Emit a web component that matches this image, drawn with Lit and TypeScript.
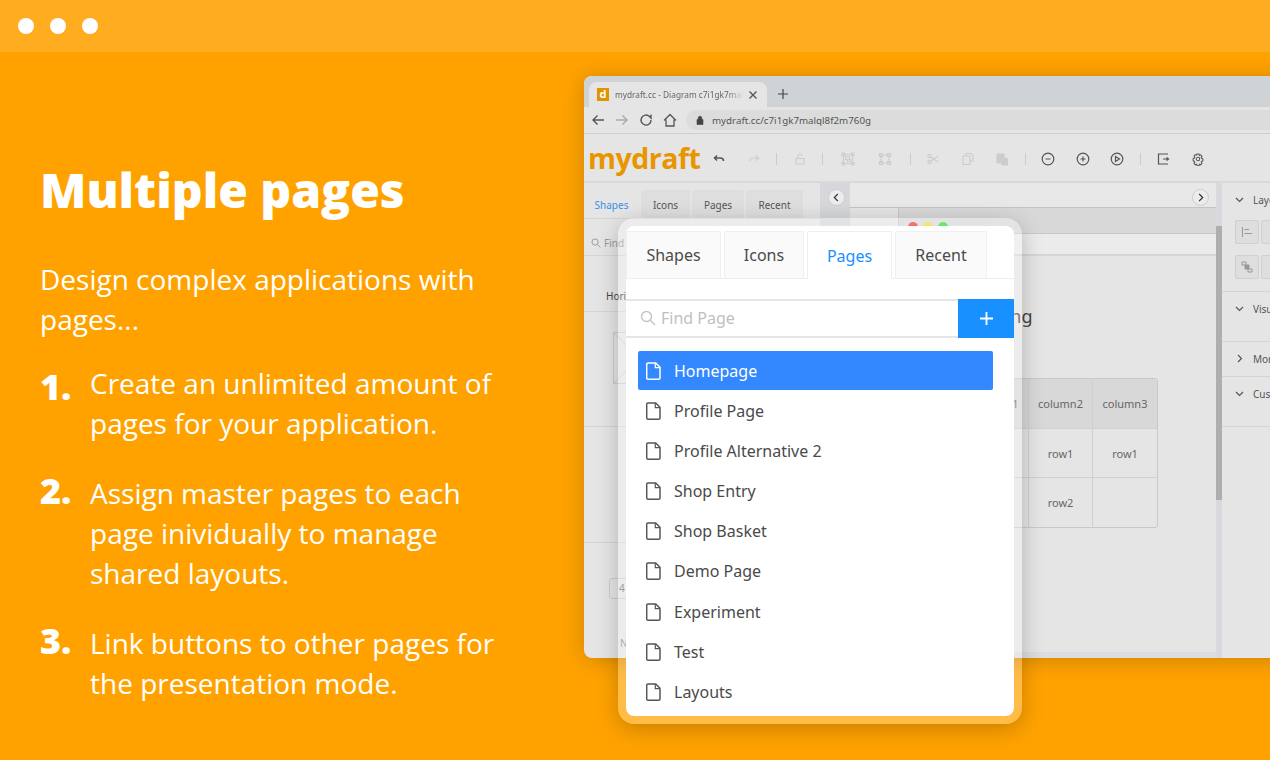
import { LitElement, html, css, svg } from "lit";
import { customElement } from "lit/decorators.js";

const pageIcon = svg`<path d="M2 .9h7.700l4.300 4.400v10.600a1.300 1.300 0 0 1-1.300 1.300H2a1.300 1.300 0 0 1-1.300-1.300V2.200A1.300 1.300 0 0 1 2 .9z" fill="none" stroke="currentColor" stroke-width="1.500"/><path d="M9.300 1.200v4.500h4.400" fill="none" stroke="currentColor" stroke-width="1.200"/>`;
const pages = ["Homepage", "Profile Page", "Profile Alternative 2", "Shop Entry", "Shop Basket", "Demo Page", "Experiment", "Test", "Layouts"];
const tabs = ["Shapes", "Icons", "Pages", "Recent"];
const tabWidths = [95, 80, 85, 92];
const steps = [
  ["1.", "Create an unlimited amount of pages for your application."],
  ["2.", "Assign master pages to each page inividually to manage shared layouts."],
  ["3.", "Link buttons to other pages for the presentation mode."],
];

@customElement("app-root")
export class AppRoot extends LitElement {
  static styles = css`
    :host { display: block; width: 1270px; height: 760px; overflow: hidden; position: relative; background: #ffa200; font-family: "Open Sans", sans-serif; color: #fff; }
    .topbar { height: 52px; background: #ffac21; display: flex; align-items: center; gap: 16px; padding-left: 18px; box-sizing: border-box; }
    .dot { width: 16px; height: 16px; border-radius: 50%; background: #fff; }
    .main { display: flex; height: 708px; }
    .copy { width: 584px; flex: none; box-sizing: border-box; padding: 103px 60px 0 40px; }
    h1 { margin: 0 0 34px; font-size: 48px; line-height: 70px; font-weight: 800; height: 70px; }
    .intro { margin: 0 0 24px; font-size: 28px; line-height: 40px; font-weight: 400; width: 460px; }
    .step { display: flex; margin-bottom: 30px; font-size: 28px; line-height: 40px; }
    .num { width: 50px; flex: none; font-weight: 800; font-size: 36px; padding-top: 4px; box-sizing: border-box; height: 40px; }
    .num.lift { padding-top: 0; margin-top: -2px; }
    .txt { width: 420px; }
    .stage { flex: 1; padding-top: 24px; min-width: 0; }
    .win { height: 582px; width: 720px; background: #e5e5e5; border-radius: 8px 0 0 8px; overflow: hidden; color: #444; font-family: "Open Sans", sans-serif; display: flex; flex-direction: column; }
    .shadow { border-radius: 8px 0 0 8px; box-shadow: 0 2px 22px rgba(0,0,0,.2); height: 582px; width: 720px; }
    .chrome { height: 31px; flex: none; background: #d0d3d6; padding: 6px 0 0 5px; box-sizing: border-box; display: flex; align-items: stretch; }
    .ctab { width: 178px; background: #e5e5e5; border-radius: 8px 8px 0 0; display: flex; align-items: center; box-sizing: border-box; padding: 0 7px 0 8px; color: #666; white-space: nowrap; }
    .fav { width: 12px; height: 13px; background: #e39300; color: #fff; font-weight: 700; font-size: 11px; line-height: 12px; text-align: center; flex: none; margin-right: 6px; }
    .ctitle { width: 130px; overflow: hidden; font-family: "Noto Sans", sans-serif; font-size: 8.300px; -webkit-mask-image: linear-gradient(to right, #000 88%, transparent); mask-image: linear-gradient(to right, #000 88%, transparent); }
    .cx { width: 14px; height: 14px; margin-left: 3px; flex: none; }
    .plus { margin: 6px 0 0 10px; width: 12px; height: 12px; flex: none; }
    .addr { height: 27px; flex: none; display: flex; align-items: center; padding-left: 7px; box-sizing: border-box; border-bottom: 1px solid #cfcfcf; }
    .addr > svg { width: 14px; height: 14px; margin-right: 10px; flex: none; }
    .pill { margin-left: -1px; height: 20px; flex: 1; background: #dcdcdc; border-radius: 10px 0 0 10px; display: flex; align-items: center; padding-left: 9px; font-size: 9.750px; color: #555; font-family: "Noto Sans", sans-serif; white-space: nowrap; }
    .pill svg { width: 10px; height: 10px; margin-right: 7px; flex: none; }
    .tools { height: 49px; flex: none; display: flex; align-items: center; border-bottom: 2px solid #d9d9d9; box-sizing: border-box; padding-top: 2px; }
    .logo { font-size: 28.500px; font-weight: 700; color: #e89500; margin-left: 4px; width: 124px; flex: none; letter-spacing: -.5px; line-height: 38px; margin-bottom: 2px; }
    .tools svg { width: 14px; height: 14px; flex: none; fill: none; stroke: #555; stroke-width: 1.200; }
    .tools svg.off { stroke: #cdcdcd; }
    .ti { margin-right: 20.500px; display: flex; flex: none; }
    .ti.w1 { margin-left: 2px; margin-right: 23.500px; }
    .ti.w2 { margin-right: 22.500px; }
    .sep { width: 1px; height: 12px; background: #ccc; margin: 0 15.500px 0 -5px; flex: none; }
    .body { flex: 1; display: flex; min-height: 0; }
    .left { width: 236px; flex: none; font-size: 10px; display: flex; flex-direction: column; }
    .ltabs { display: flex; height: 36px; gap: 2px; box-sizing: border-box; padding-top: 7px; border-bottom: 1px solid #d5d5d5; }
    .ltab { background: #dedede; display: flex; align-items: center; justify-content: center; font-family: "Noto Sans", sans-serif; color: #555; font-size: 10px; box-sizing: border-box; border-radius: 2px 2px 0 0; padding-top: 1px; }
    .ltab.on { background: #e5e5e5; color: #3a90e6; }
    .lfind { height: 37px; padding: 11px 0 0 7px; display: flex; align-items: center; gap: 3px; color: #999; border-bottom: 1px solid #d5d5d5; font-family: "Noto Sans", sans-serif; box-sizing: border-box; }
    .lfind svg { width: 10px; height: 10px; }
    .lhori { height: 56px; padding: 33px 0 0 22px; line-height: 15px; box-sizing: border-box; border-bottom: 1px solid #d5d5d5; font-family: "Noto Sans", sans-serif; }
    .lbox { width: 52px; height: 52px; margin: 20px 0 0 29px; border: 1px solid #ccc; box-sizing: border-box; background: linear-gradient(to bottom left, transparent 49.500%, #ccc 50%, transparent 50.500%), linear-gradient(to bottom right, transparent 49.500%, #ccc 50%, transparent 50.500%); }
    .lrule { margin-top: 42px; border-top: 1px solid #d5d5d5; border-bottom: 1px solid #d5d5d5; height: 117px; box-sizing: border-box; flex: none; }
    .lnum { width: 30px; height: 21px; margin: 35px 0 0 25px; border: 1px solid #ccc; border-radius: 3px; box-sizing: border-box; padding-left: 9px; line-height: 19px; font-family: "Noto Sans", sans-serif; color: #777; }
    .ln { margin: 37px 0 0 36px; color: #888; font-family: "Noto Sans", sans-serif; line-height: 14px; }
    .gutter { width: 30px; flex: none; background: #d5d7da; padding: 6px 0 0 8px; box-sizing: border-box; }
    .circ { width: 17px; height: 17px; border-radius: 50%; background: #ececec; border: 1px solid #ccc; box-sizing: border-box; display: block; }
    .canvas { width: 366px; flex: none; display: flex; flex-direction: column; }
    .chead { height: 25px; background: #e8e8e8; border-bottom: 1px solid #c4c4c4; display: flex; justify-content: flex-end; padding: 6px 7px 0 0; box-sizing: border-box; flex: none; }
    .cbar1 { height: 26px; margin-left: 48px; background: #d8d8d8; border-bottom: 1px solid #c8c8c8; border-left: 1px solid #c8c8c8; box-sizing: border-box; flex: none; }
    .cbar2 { height: 22px; background: #ebebeb; border-bottom: 2px solid #d6d6d6; margin-left: 48px; box-sizing: border-box; flex: none; }
    .cbody { flex: 1; padding: 0 0 0 113px; border-bottom: 6px solid #dcdde0; min-height: 0; }
    .chtxt { font-size: 18px; height: 122px; padding: 48px 0 0 1px; box-sizing: border-box; color: #444; font-family: "Noto Sans", sans-serif; }
    .grid { width: 195px; border: 1px solid #c9c9c9; border-radius: 3px; display: grid; grid-template-columns: 65px 64px 64px; grid-template-rows: 50px 49px 49px; font-size: 11px; color: #666; font-family: "Noto Sans", sans-serif; box-sizing: border-box; }
    .cell { display: flex; align-items: center; justify-content: center; border-right: 1px solid #d0d0d0; border-bottom: 1px solid #d0d0d0; box-sizing: border-box; }
    .cell.h { background: #d8d8d8; }
    .cell:nth-child(3n) { border-right: 0; }
    .cell:nth-last-child(-n+3) { border-bottom: 0; }
    .scroll { width: 6px; flex: none; background: #d8d9dc; }
    .scroll i { display: block; width: 6px; height: 274px; margin-top: 43px; background: #aeaeae; }
    .right { flex: 1; font-size: 10px; color: #555; font-family: "Noto Sans", sans-serif; overflow: hidden; white-space: nowrap; min-width: 0; }
    .sec { border-bottom: 1px solid #d4d4d4; padding-left: 13px; box-sizing: border-box; }
    .hd { display: flex; align-items: center; gap: 9px; height: 17px; padding-top: 8px; }
    .hd svg { width: 9px; height: 9px; fill: none; stroke: #555; stroke-width: 1.200; flex: none; }
    .btns { display: flex; gap: 2px; margin-top: 11px; }
    .hd + .btns { margin-top: 12px; }
    .bt { width: 24px; height: 24px; background: #dedede; border: 1px solid #d0d0d0; border-radius: 2px; box-sizing: border-box; flex: none; display: flex; align-items: center; justify-content: center; }
    .bt svg { width: 12px; height: 12px; fill: none; stroke: #999; stroke-width: 1; }
    .s109 { height: 109px; }
    .s50 { height: 50px; }
    .s35 { height: 35px; }

    .pop { position: absolute; left: 618px; top: 218px; width: 404px; height: 506px; box-sizing: border-box; border: 8px solid rgba(255,255,255,.28); border-radius: 16px; background-clip: padding-box; box-shadow: 0 5px 22px rgba(0,0,0,.22); }
    .traffic { position: absolute; left: 908px; top: 222px; display: flex; gap: 5px; }
    .traffic i { width: 10px; height: 10px; border-radius: 50%; display: block; }
    .r { background: #f03a3a; }
    .y { background: #e6e030; }
    .g { background: #30e030; }
    .sheet { background: #fff; height: 100%; border-radius: 8px; overflow: hidden; color: #444; font-family: "Noto Sans", sans-serif; }
    .ptabs { display: flex; height: 53px; padding-top: 5px; gap: 3px; box-sizing: border-box; border-bottom: 1px solid #eee; }
    .ptab { background: #fafafa; border: 1px solid #f0f0f0; border-bottom: 0; display: flex; align-items: center; justify-content: center; font-size: 16px; box-sizing: border-box; border-radius: 2px 2px 0 0; color: #4a4a4a; }
    .ptab.on { background: #fff; color: #1890ff; height: 48px; border-color: #eee; }
    .psearch { margin-top: 20px; height: 39px; border-top: 2px solid #e6e6e6; border-bottom: 2px solid #e6e6e6; display: flex; align-items: center; box-sizing: border-box; position: relative; padding-bottom: 1px; }
    .psearch > svg { width: 16px; height: 16px; margin-left: 14px; fill: none; stroke: #c4c4c4; stroke-width: 1.400; }
    .psearch span { margin-left: 5px; font-size: 16px; color: #bfbfbf; }
    .add { position: absolute; right: 0; top: -2px; width: 56px; height: 39px; background: #1890ff; display: flex; align-items: center; justify-content: center; }
    .add svg { width: 13px; height: 13px; stroke: #fff; stroke-width: 2; }
    .plist { padding: 13px 21px 0 12px; }
    .pitem { height: 40.100px; display: flex; align-items: center; padding-left: 8px; font-size: 16px; color: #4a4a4a; border-radius: 2px; box-sizing: border-box; }
    .pitem svg { width: 15px; height: 18px; margin-right: 13px; flex: none; color: #555; }
    .pitem.sel { background: #3388ff; color: #fff; height: 39px; margin-bottom: 1px; }
    .pitem.sel svg { color: #fff; }
  `;

  render() {
    const ico = (p: unknown, off = false, cls = "") => html`<span class="ti ${cls}"><svg class=${off ? "off" : ""} viewBox="0 0 14 14">${p}</svg></span>`;
    const ltw = [55, 49, 52, 57];
    return html`
      <div class="topbar"><span class="dot"></span><span class="dot"></span><span class="dot"></span></div>
      <div class="main">
        <section class="copy">
          <h1>Multiple pages</h1>
          <p class="intro">Design complex applications with pages...</p>
          ${steps.map(([n, t], i) => html`<div class="step"><span class="num ${i > 0 ? "lift" : ""}">${n}</span><span class="txt">${t}</span></div>`)}
        </section>
        <section class="stage">
          <div class="shadow">
          <div class="win">
            <div class="chrome">
              <div class="ctab"><span class="fav">d</span><span class="ctitle">mydraft.cc - Diagram c7i1gk7malql8f2m760g</span>
                <svg class="cx" viewBox="0 0 14 14" fill="none" stroke="#555" stroke-width="1.300"><path d="M3.500 3.500l7 7M10.500 3.500l-7 7"/></svg></div>
              <svg class="plus" viewBox="0 0 12 12" fill="none" stroke="#444" stroke-width="1.200"><path d="M6 1v10M1 6h10"/></svg>
            </div>
            <div class="addr">
              <svg viewBox="0 0 14 14" fill="none" stroke="#555" stroke-width="1.400"><path d="M13 7H2M6.500 2.500 2 7l4.500 4.500"/></svg>
              <svg viewBox="0 0 14 14" fill="none" stroke="#aaa" stroke-width="1.400"><path d="M1 7h11M7.500 2.500 12 7l-4.500 4.500"/></svg>
              <svg viewBox="0 0 14 14" fill="none" stroke="#555" stroke-width="1.400"><path d="M12 7a5 5 0 1 1-1.500-3.500L12 5V1.500"/></svg>
              <svg viewBox="0 0 14 14" fill="none" stroke="#555" stroke-width="1.300"><path d="M1 7.500 7 1.500l6 6M3 6.500V13h8V6.500"/></svg>
              <div class="pill"><svg viewBox="0 0 10 10"><path d="M2 4.500h6V9.500H2zM3.200 4.500V3a1.800 1.800 0 0 1 3.600 0v1.500" fill="#444" stroke="#444" stroke-width=".6"/></svg>mydraft.cc/c7i1gk7malql8f2m760g</div>
            </div>
            <div class="tools">
              <span class="logo">mydraft</span>
              ${ico(svg`<path d="M2.500 6h6a3 3 0 0 1 3 3M5 3.500 2.500 6 5 8.500" stroke-width="1.500"/>`)}
              ${ico(svg`<path d="M11.500 6h-6a3 3 0 0 0-3 3M9 3.500 11.500 6 9 8.500"/>`, true)}
              <span class="sep"></span>
              ${ico(svg`<path d="M3 6.500h8V12H3zM5 6.500V4a2 2 0 0 1 4 0"/>`, true)}
              <span class="sep"></span>
              ${ico(svg`<path d="M2.500 2.500h9v9h-9zM1 1h2.500v2.500H1zM10.500 1H13v2.500h-2.500zM1 10.500h2.500V13H1zM10.500 10.500H13V13h-2.500zM4.500 4.500h4v3h-4zM6.500 7.500h3v2h-3z"/>`, true, "w1")}
              ${ico(svg`<path d="M3 3h8v8H3zM1.500 1.500h3v3h-3zM9.500 1.500h3v3h-3zM1.500 9.500h3v3h-3zM9.500 9.500h3v3h-3z"/>`, true, "w2")}
              <span class="sep"></span>
              ${ico(svg`<circle cx="3.500" cy="4" r="1.600"/><circle cx="3.500" cy="10" r="1.600"/><path d="M5 5l7 5M5 9l7-5"/>`, true)}
              ${ico(svg`<path d="M5 4V1.500h5l2 2V9H9M2 4h7v8.500H2z"/>`, true)}
              ${ico(svg`<path d="M2 2h7v9H2zM7 6h4l1.500 1.500V13H7z" fill="#ccc"/>`, true)}
              <span class="sep"></span>
              ${ico(svg`<circle cx="7" cy="7" r="5.800"/><path d="M4.500 7h5"/>`)}
              ${ico(svg`<circle cx="7" cy="7" r="5.800"/><path d="M4.500 7h5M7 4.500v5"/>`)}
              ${ico(svg`<circle cx="7" cy="7" r="5.800"/><path d="M5.500 4.500 9.500 7l-4 2.500z"/>`)}
              <span class="sep"></span>
              ${ico(svg`<path d="M12 2H2.500v10H12M7 7h5.500M10.500 5.500 12.500 7l-2 1.500"/>`)}
              ${ico(svg`<g transform="translate(1 1) scale(.857)"><circle cx="7" cy="7" r="2"/><path d="M5.800 1.200h2.400l.4 1.700 1.600-.7 1.500 1.800-1 1.400.5.900 1.500.6v2.200l-1.500.6-.5.900 1 1.400-1.500 1.800-1.600-.7-.4 1.700H5.800l-.4-1.700-1.600.7-1.500-1.800 1-1.400-.5-.9-1.500-.6V6.500l1.500-.6.500-.9-1-1.400 1.500-1.800 1.600.7z"/></g>`)}
            </div>
            <div class="body">
              <div class="left">
                <div class="ltabs">${tabs.map((t, i) => html`<span class="ltab ${i === 0 ? "on" : ""}" style="width:${ltw[i]}px">${t}</span>`)}</div>
                <div class="lfind"><svg viewBox="0 0 16 16" fill="none" stroke="#999" stroke-width="1.500"><circle cx="6.500" cy="6.500" r="5"/><path d="M10.500 10.500 15 15"/></svg>Find</div>
                <div class="lhori">Hori</div>
                <div class="lbox"></div>
                <div class="lrule"></div>
                <div class="lnum">4</div>
                <div class="ln">N</div>
              </div>
              <div class="gutter"><svg class="circ" viewBox="0 0 17 17" fill="none" stroke="#333" stroke-width="1.300"><path d="M10 4.500 6 8.500l4 4"/></svg></div>
              <div class="canvas">
                <div class="chead"><svg class="circ" viewBox="0 0 17 17" fill="none" stroke="#333" stroke-width="1.300"><path d="M7 4.500l4 4-4 4"/></svg></div>
                <div class="cbar1"></div>
                <div class="cbar2"></div>
                <div class="cbody">
                  <div class="chtxt">Landing</div>
                  <div class="grid">
                    <div class="cell h">column1</div><div class="cell h">column2</div><div class="cell h">column3</div>
                    <div class="cell">row1</div><div class="cell">row1</div><div class="cell">row1</div>
                    <div class="cell">row2</div><div class="cell">row2</div><div class="cell"></div>
                  </div>
                </div>
              </div>
              <div class="scroll"><i></i></div>
              <div class="right">
                <div class="sec s109"><div class="hd"><svg viewBox="0 0 9 9"><path d="M1 3l3.500 3.500L8 3"/></svg>Layout</div>
                  <div class="btns"><span class="bt"><svg viewBox="0 0 12 12"><path d="M1.500 1v10M3.500 3.500H8M3.500 7.500H11"/></svg></span><span class="bt"></span></div>
                  <div class="btns"><span class="bt"><svg viewBox="0 0 12 12"><path d="M1 1h4v3H1zM7 8h4v3H7z"/><path d="M4 4h4v4H4z" fill="#999"/></svg></span><span class="bt"></span></div>
                </div>
                <div class="sec s50"><div class="hd"><svg viewBox="0 0 9 9"><path d="M1 3l3.500 3.500L8 3"/></svg>Visual</div></div>
                <div class="sec s35"><div class="hd"><svg viewBox="0 0 9 9"><path d="M3 1l3.500 3.500L3 8"/></svg>More</div></div>
                <div class="sec s50"><div class="hd"><svg viewBox="0 0 9 9"><path d="M1 3l3.500 3.500L8 3"/></svg>Custom</div></div>
              </div>
            </div>
          </div>
          </div>
        </section>
      </div>
      <div class="traffic"><i class="r"></i><i class="y"></i><i class="g"></i></div>
      <div class="pop">
        <div class="sheet">
          <div class="ptabs">
            ${tabs.map((t, i) => html`<div class="ptab ${i === 2 ? "on" : ""}" style="width:${tabWidths[i]}px">${t}</div>`)}
          </div>
          <div class="psearch">
            <svg viewBox="0 0 16 16"><circle cx="6.500" cy="6.500" r="5"/><path d="M10.300 10.300 15 15"/></svg>
            <span>Find Page</span>
            <div class="add"><svg viewBox="0 0 14 14" fill="none"><path d="M7 0v14M0 7h14"/></svg></div>
          </div>
          <div class="plist">
            ${pages.map((p, i) => html`<div class="pitem ${i === 0 ? "sel" : ""}"><svg viewBox="0 0 15 18">${pageIcon}</svg>${p}</div>`)}
          </div>
        </div>
      </div>
    `;
  }
}
